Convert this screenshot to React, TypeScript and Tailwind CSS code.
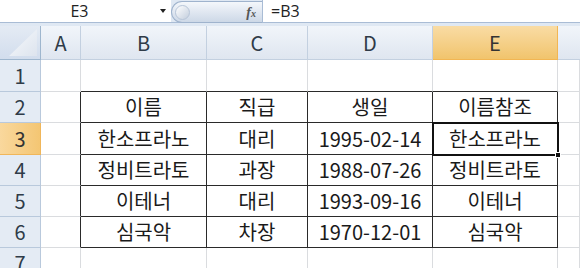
import React from 'react'

const cols = ['A', 'B', 'C', 'D', 'E', 'F']
const selCol = 'E'
const selRow = 3

// B2:E6
const data: Record<number, string[]> = {
  2: ['이름', '직급', '생일', '이름참조'],
  3: ['한소프라노', '대리', '1995-02-14', '한소프라노'],
  4: ['정비트라토', '과장', '1988-07-26', '정비트라토'],
  5: ['이테너', '대리', '1993-09-16', '이테너'],
  6: ['심국악', '차장', '1970-12-01', '심국악'],
}

const rowHeights = ['h-[32px]', 'h-[31px]', 'h-[32px]', 'h-[31px]', 'h-[31px]', 'h-[31px]', 'h-[31px]']

const font = { fontFamily: '"Noto Sans CJK KR", "Noto Sans", sans-serif' }
const uiFont = { fontFamily: '"Open Sans", "Liberation Sans", sans-serif' }

function inTable(r: number, ci: number) {
  return r >= 2 && r <= 6 && ci >= 1 && ci <= 4
}

export default function App() {
  return (
    <div className="w-[580px] h-[268px] overflow-hidden bg-white relative" style={font}>
      {/* Formula bar */}
      <div className="flex h-[23px] bg-[#dfe8f3] border-b border-[#a9bcd5]">
        <div className="w-[171px] bg-white flex items-center relative">
          <span className="flex-1 text-center text-[16px] text-[#222] leading-none pr-[12px]" style={uiFont}>E3</span>
          <span className="absolute left-[160px] top-[9px] w-0 h-0 border-l-[3px] border-r-[3px] border-t-[4px] border-l-transparent border-r-transparent border-t-[#222]" />
        </div>
        <div className="w-[91px] h-[22px] mt-[1px] rounded-l-full border border-r-0 border-[#9fb3cd] bg-gradient-to-b from-[#f4f7fb] to-[#cdd8e7] flex items-center relative">
          <span className="ml-[3px] w-[15px] h-[15px] rounded-full border border-[#b7c5d8] bg-gradient-to-br from-[#ffffff] to-[#c3cedd]" />
          <span className="absolute right-[6px] top-[1px] text-[14px] italic font-bold text-[#555] leading-[20px]" style={{ fontFamily: '"Liberation Serif", serif' }}>
            f<span className="text-[10px]">x</span>
          </span>
        </div>
        <div className="flex-1 bg-white border-l border-[#a9bcd5] flex items-center pl-[8px] text-[16px] text-[#222]" style={uiFont}>
          =B3
        </div>
      </div>
      <div className="h-[3px] bg-[#dfe8f3]" />

      {/* Sheet */}
      <div className="grid grid-cols-[41px_40px_126px_101px_125px_125px_1fr] text-[20px] text-[#1a1a1a]">
        {/* Header row */}
        <div className="h-[34px] bg-gradient-to-b from-[#e4ebf4] to-[#d2dded] border-r border-b border-[#9eb6ce] relative overflow-hidden">
          <svg className="absolute right-[3px] bottom-[3px]" width="28" height="27" viewBox="0 0 28 27">
            <defs>
              <linearGradient id="tri" x1="0" y1="0" x2="1" y2="1">
                <stop offset="0" stopColor="#f7f9fc" />
                <stop offset="1" stopColor="#dde4ee" />
              </linearGradient>
            </defs>
            <polygon points="28,0 28,27 0,27" fill="url(#tri)" />
          </svg>
        </div>
        {cols.map((c) => (
          <div
            key={c}
            className={`h-[34px] flex items-center justify-center border-b border-r ${
              c === selCol
                ? 'bg-gradient-to-b from-[#f9dca4] to-[#f1c46c] border-[#f2b653] text-[#333]'
                : 'bg-gradient-to-b from-[#f1f5fa] to-[#dfe6f0] border-[#c3d0e0] text-[#2f3b48]'
            } ${c === 'F' ? 'border-r-0' : ''}`}
          >
            {c === 'F' ? '' : c}
          </div>
        ))}

        {/* Rows */}
        {[1, 2, 3, 4, 5, 6, 7].map((r, ri) => (
          <React.Fragment key={r}>
            <div
              className={`${rowHeights[ri]} flex items-center justify-center border-r border-b ${
                r === selRow
                  ? 'bg-gradient-to-r from-[#f9d89d] to-[#f4c673] border-[#f0b65a] text-[#333]'
                  : 'bg-[#e4ebf4] border-[#b9c9dc] text-[#2f3b48]'
              }`}
            >
              {r}
            </div>
            {cols.map((c, ci) => {
              const t = inTable(r, ci)
              const rightBlack = t || (ci === 0 && r >= 2 && r <= 6)
              const bottomBlack = t || (r === 1 && ci >= 1 && ci <= 4)
              return (
                <div
                  key={c}
                  className={`${rowHeights[ri]} flex items-center justify-center whitespace-nowrap border-r border-b ${
                    rightBlack ? 'border-r-[#2a2a2a]' : 'border-r-[#dadcdf]'
                  } ${bottomBlack ? 'border-b-[#2a2a2a]' : 'border-b-[#dadcdf]'}`}
                >
                  {t ? data[r][ci - 1] : ''}
                </div>
              )
            })}
          </React.Fragment>
        ))}
      </div>

      {/* Selection E3 */}
      <div className="absolute left-[432px] top-[122px] w-[127px] h-[34px] border-2 border-[#111] pointer-events-none" />
      <div className="absolute left-[555px] top-[152px] w-[6px] h-[6px] bg-[#111] border border-white pointer-events-none" />
    </div>
  )
}
